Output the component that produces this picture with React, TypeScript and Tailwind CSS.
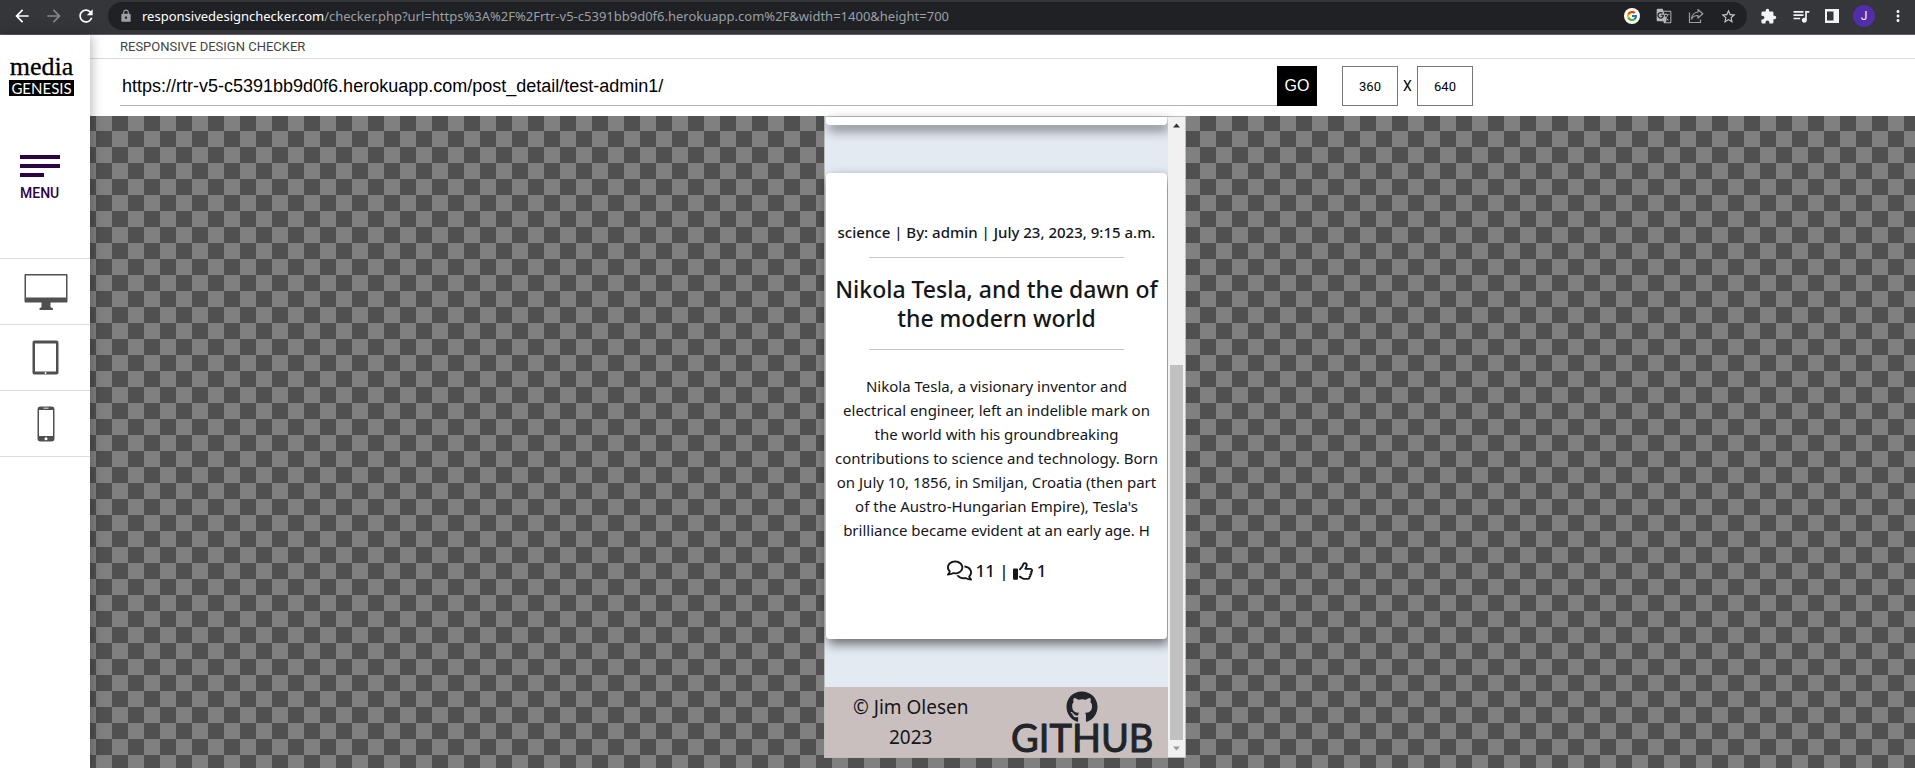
import React from "react";
import {
  MdArrowBack,
  MdArrowForward,
  MdExtension,
  MdGTranslate,
  MdLock,
  MdMoreVert,
  MdQueueMusic,
  MdRefresh,
  MdStarBorder,
} from "react-icons/md";
import { FcGoogle } from "react-icons/fc";
import { FaGithub, FaRegComments, FaRegThumbsUp } from "react-icons/fa6";

const sans = "font-['Noto_Sans',sans-serif]";

function ShareIcon() {
  return (
    <svg width="16" height="16" viewBox="0 0 16 16" fill="none" stroke="#9aa0a6" strokeWidth="1.2" aria-hidden="true">
      <path d="M1.5 4.5v10h11v-3" />
      <path d="M10 1.5l4.8 4.2L10 10V7.500C7 7.300 5 8.500 3.500 11 4 7 6.300 4.300 10 4z" strokeLinejoin="round" />
    </svg>
  );
}

function PanelIcon() {
  return (
    <svg width="14" height="14" viewBox="0 0 14 14" aria-hidden="true">
      <path fill="#f1f3f4" fillRule="evenodd" d="M0 0h14v14H0zM2 2.500v9h6.500v-9z" />
    </svg>
  );
}

function BrowserBar() {
  return (
    <div className="flex h-[35px] items-start border-b border-[#5f6064] bg-[#35363a] pt-[2px]">
      <div className="flex h-7 w-[108px] shrink-0 items-center gap-3 pl-3">
        <button aria-label="Back" className="text-white"><MdArrowBack size={20} /></button>
        <button aria-label="Forward" className="text-[#85868a]"><MdArrowForward size={20} /></button>
        <button aria-label="Reload" className="text-white"><MdRefresh size={20} /></button>
      </div>
      <div className="flex h-7 min-w-0 flex-1 items-center rounded-full bg-[#202124] pl-[11px] pr-[10px] text-[#9aa0a6]">
        <MdLock size={14} className="shrink-0" />
        <p className={`${sans} ml-[9px] min-w-0 flex-1 truncate text-[13px] leading-5`}>
          <span className="text-white">responsivedesignchecker.com</span>
          /checker.php?url=https%3A%2F%2Frtr-v5-c5391bb9d0f6.herokuapp.com%2F&amp;width=1400&amp;height=700
        </p>
        <div className="flex shrink-0 items-center gap-4">
          <button aria-label="Google" className="rounded-full bg-white p-[2px]"><FcGoogle size={12} /></button>
          <button aria-label="Translate" className="text-[#b4b7bb]"><MdGTranslate size={16} /></button>
          <button aria-label="Share"><ShareIcon /></button>
          <button aria-label="Bookmark" className="text-[#c4c7cb]"><MdStarBorder size={17} /></button>
        </div>
      </div>
      <div className="flex h-7 shrink-0 items-center gap-[14px] pl-[13px] pr-2 text-[#f1f3f4]">
        <button aria-label="Extensions"><MdExtension size={17} /></button>
        <button aria-label="Media"><MdQueueMusic size={20} /></button>
        <button aria-label="Side panel"><PanelIcon /></button>
        <button aria-label="Profile" className="size-[22px] rounded-full bg-[#512da8] font-['Roboto',sans-serif] text-[12px] leading-[22px]">J</button>
        <button aria-label="More"><MdMoreVert size={18} /></button>
      </div>
    </div>
  );
}

const devices = [
  {
    name: "Desktop",
    art: (
      <svg width="44" height="38" viewBox="0 0 44 38" aria-hidden="true">
        <path fill="#505050" fillRule="evenodd" d="M1.500 1h41q1 0 1 1v26.500q0 1-1 1h-41q-1 0-1-1V2q0-1 1-1zM2 2.500v22h40v-22zM17.500 29.500h9V34l2.500 1.500V37H15.500v-1.500l2-1.500z" />
      </svg>
    ),
  },
  {
    name: "Tablet",
    art: (
      <svg width="28" height="36" viewBox="0 0 28 36" aria-hidden="true">
        <path fill="#505050" fillRule="evenodd" d="M2.500.5h22q2 0 2 2v30q0 2-2 2h-22q-2 0-2-2v-30q0-2 2-2zM3 3.500v28h21v-28z" />
        <circle cx="13.500" cy="33" r=".9" fill="#fff" />
      </svg>
    ),
  },
  {
    name: "Phone",
    art: (
      <svg width="18" height="36" viewBox="0 0 18 36" aria-hidden="true">
        <path fill="#505050" fillRule="evenodd" d="M3.500.5h11q3 0 3 3v29q0 3-3 3h-11q-3 0-3-3v-29q0-3 3-3zM2 4v26h14V4z" />
        <path d="M6.500 2.200h5" stroke="#ccc" strokeWidth="1.200" />
        <circle cx="9" cy="32.700" r="1.500" fill="#fff" />
      </svg>
    ),
  },
];

function Sidebar() {
  return (
    <aside className="z-10 w-[90px] shrink-0 bg-white shadow-[0_0_12px_rgba(0,0,0,0.35)]">
      <a href="#" className="ml-[9px] mt-[19px] block w-[65px] text-center text-black">
        <span className="block font-['Liberation_Serif',serif] text-[26px] leading-[26px] [-webkit-text-stroke:0.3px_#000]">media</span>
        <span className="block bg-black font-['Lato',sans-serif] text-[15px] leading-4 text-white">GENESIS</span>
      </a>
      <button className="ml-5 mt-[58px] block h-12 w-10 text-left">
        <span className="block h-[4px] bg-[#2d0245]" />
        <span className="mt-[5px] block h-[4px] bg-[#2d0245]" />
        <span className="mt-[5px] block h-[4px] w-6 bg-[#2d0245]" />
        <span className="mt-2 block font-['Roboto',sans-serif] text-[14px] font-medium leading-4 text-[#2d0245]">MENU</span>
      </button>
      <nav className="mt-14 border-t border-[#dcdcdc]">
        {devices.map((d) => (
          <button key={d.name} aria-label={d.name} className="flex h-[66px] w-full items-center justify-center border-b border-[#dcdcdc] pl-[2px]">
            {d.art}
          </button>
        ))}
      </nav>
    </aside>
  );
}

function CheckerHeader() {
  return (
    <header className="bg-white">
      <h1 className="h-6 border-b border-[#dcdcdc] pl-[30px] font-['Roboto',sans-serif] text-[13px] leading-6 text-[#444]">
        RESPONSIVE DESIGN CHECKER
      </h1>
      <form className="flex items-center pb-[10px] pl-[30px] pt-[7px]" onSubmit={(e) => e.preventDefault()}>
        <input
          aria-label="Website address"
          defaultValue="https://rtr-v5-c5391bb9d0f6.herokuapp.com/post_detail/test-admin1/"
          className="h-10 w-full max-w-[1157px] border-b border-[#b5b5b5] px-[2px] pt-[2px] font-['Liberation_Sans',sans-serif] text-[18px] text-black outline-none"
        />
        <button className="size-10 shrink-0 bg-black font-['Liberation_Sans',sans-serif] text-[16px] text-white">GO</button>
        <div className="ml-[25px] flex shrink-0 items-center font-['Roboto',sans-serif] text-black">
          <input aria-label="Width" defaultValue="360" className="h-10 w-14 border border-[#767676] text-center text-[13px] outline-none" />
          <span className="w-[19px] text-center text-[14px]">X</span>
          <input aria-label="Height" defaultValue="640" className="h-10 w-14 border border-[#767676] text-center text-[13px] outline-none" />
        </div>
      </form>
    </header>
  );
}

function Scrollbar() {
  return (
    <div className="flex w-[17px] shrink-0 flex-col items-center bg-[#f1f1f1]">
      <svg width="17" height="17" viewBox="0 0 17 17" aria-hidden="true"><path d="M5 10.500l3.500-4 3.500 4z" fill="#303030" /></svg>
      <div className="flex-[231]" />
      <div className="w-[13px] flex-[375] bg-[#c1c1c1]" />
      <svg width="17" height="17" viewBox="0 0 17 17" aria-hidden="true"><path d="M5 6.500l3.500 4 3.500-4z" fill="#999" /></svg>
    </div>
  );
}

function PhonePreview() {
  return (
    <section className="flex h-[642px] w-[362px] border border-[#bdbdbd] bg-[#e3eaf2]">
      <div className={`${sans} flex min-w-0 flex-1 flex-col text-[#141619]`}>
        <div className="mx-px h-2 rounded-b bg-white shadow-[2px_5px_12px_rgba(0,0,0,0.55)]" />
        <article className="mx-px mt-12 flex h-[466px] flex-col items-center rounded bg-white pt-[47px] text-center shadow-[2px_5px_12px_rgba(0,0,0,0.55)]">
          <p className="text-[15px] font-medium leading-6">science | By: admin | July 23, 2023, 9:15 a.m.</p>
          <hr className="mt-[13px] w-[255px] border-[#c4c5c6]" />
          <h2 className="mt-[17px] text-[23px] font-medium leading-[29px]">
            Nikola Tesla, and the dawn of
            <br />
            the modern world
          </h2>
          <hr className="mt-4 w-[255px] border-[#c4c5c6]" />
          <p className="mt-6 whitespace-nowrap text-[15px] leading-6">
            Nikola Tesla, a visionary inventor and
            <br />
            electrical engineer, left an indelible mark on
            <br />
            the world with his groundbreaking
            <br />
            contributions to science and technology. Born
            <br />
            on July 10, 1856, in Smiljan, Croatia (then part
            <br />
            of the Austro-Hungarian Empire), Tesla's
            <br />
            brilliance became evident at an early age. H
          </p>
          <p className="mt-4 flex items-center gap-1 text-[17px] font-medium leading-6">
            <FaRegComments size={25} />
            <span>11 |</span>
            <FaRegThumbsUp size={20} />
            <span>1</span>
          </p>
        </article>
        <footer className="mt-12 flex h-[70px] bg-[#cabfbf]">
          <p className="w-1/2 pt-[5px] text-center text-[19px] leading-[30px]">
            © Jim Olesen
            <br />
            2023
          </p>
          <a href="#" className="flex w-1/2 flex-col items-center pt-[4px] text-[#212529]">
            <FaGithub size={32} />
            <span className="font-['Lato',sans-serif] text-[38px] leading-[29px] [-webkit-text-stroke:1px_#212529]">GITHUB</span>
          </a>
        </footer>
      </div>
      <Scrollbar />
    </section>
  );
}

export default function App() {
  return (
    <div className="flex min-h-screen flex-col bg-white">
      <BrowserBar />
      <div className="flex flex-1">
        <Sidebar />
        <div className="flex min-w-0 flex-1 flex-col">
          <CheckerHeader />
          <main className="flex flex-1 items-start justify-center bg-[conic-gradient(#505050_25%,#808080_0_50%,#505050_0_75%,#808080_0)] bg-[length:32px_32px] bg-[position:6px_-1px] pl-[5px]">
            <PhonePreview />
          </main>
        </div>
      </div>
    </div>
  );
}
